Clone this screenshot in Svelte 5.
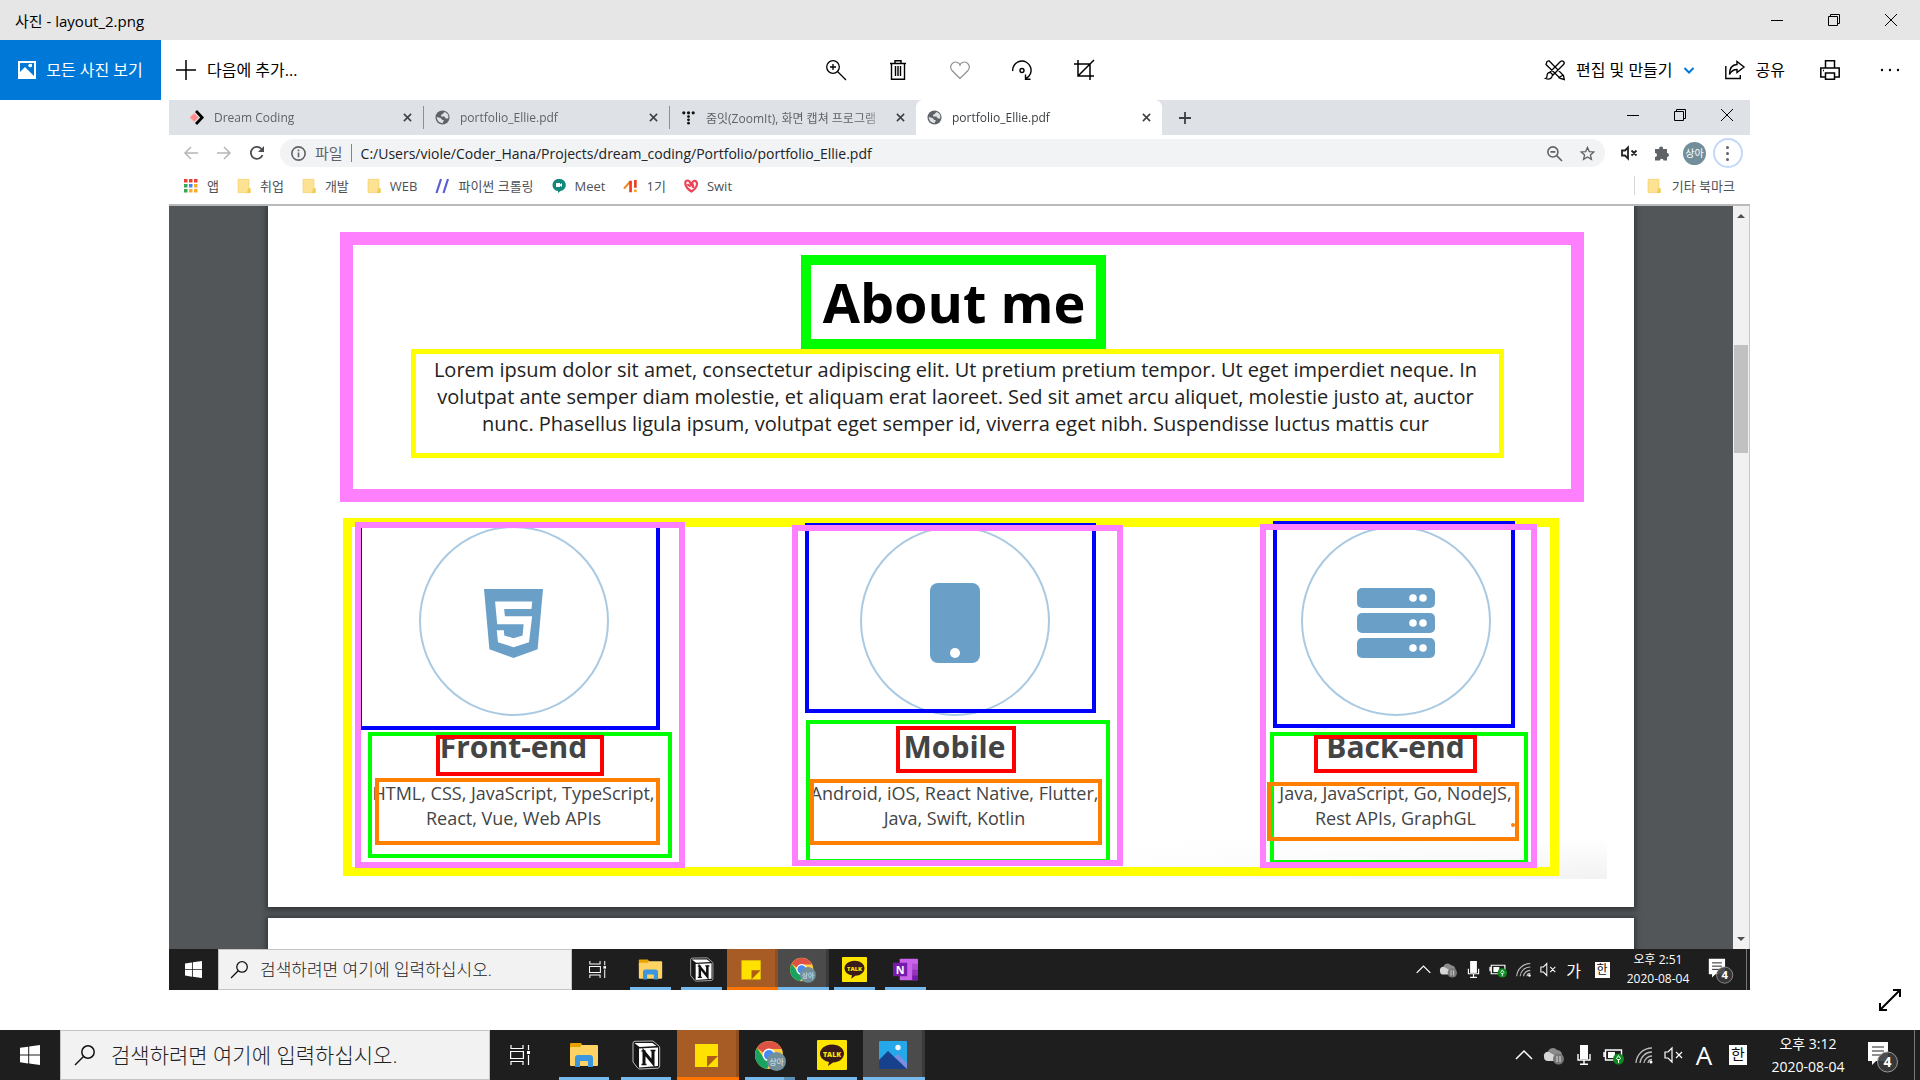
<script>
  const tabs = [
    { title: 'Dream Coding', icon: 'dream' },
    { title: 'portfolio_Ellie.pdf', icon: 'globe' },
    { title: '줌잇(ZoomIt), 화면 캡쳐 프로그램', icon: 'tistory' },
    { title: 'portfolio_Ellie.pdf', icon: 'globe', active: true }
  ];

  const bookmarks = [
    { label: '앱', icon: 'apps' },
    { label: '취업', icon: 'folder' },
    { label: '개발', icon: 'folder' },
    { label: 'WEB', icon: 'folder' },
    { label: '파이썬 크롤링', icon: 'slashes' },
    { label: 'Meet', icon: 'meet' },
    { label: '1기', icon: 'chart' },
    { label: 'Swit', icon: 'swit' }
  ];

  // Frame x is measured from the column centre, y from the column top.
  const skills = [
    {
      name: 'Front-end', icon: 'html5',
      lines: ['HTML, CSS, JavaScript, TypeScript,', 'React, Vue, Web APIs'],
      frames: [
        { color: 'blue', x: -156, y: -2, w: 302, h: 206 },
        { color: 'green', x: -146, y: 206, w: 304, h: 126 },
        { color: 'red', x: -78, y: 209, w: 168, h: 41 },
        { color: 'orange', x: -139, y: 252, w: 285, h: 67 },
        { color: 'pink', x: -159, y: -4, w: 330, h: 346 }
      ]
    },
    {
      name: 'Mobile', icon: 'phone',
      lines: ['Android, iOS, React Native, Flutter,', 'Java, Swift, Kotlin'],
      frames: [
        { color: 'blue', x: -150, y: -3, w: 291, h: 190 },
        { color: 'green', x: -149, y: 194, w: 304, h: 143 },
        { color: 'red', x: -59, y: 200, w: 120, h: 47 },
        { color: 'orange', x: -145, y: 253, w: 292, h: 66 },
        { color: 'pink', x: -163, y: -1, w: 331, h: 341 }
      ]
    },
    {
      name: 'Back-end', icon: 'server',
      lines: ['Java, JavaScript, Go, NodeJS,', 'Rest APIs, GraphGL'],
      frames: [
        { color: 'blue', x: -123, y: -5, w: 242, h: 207 },
        { color: 'green', x: -126, y: 206, w: 258, h: 132 },
        { color: 'red', x: -82, y: 209, w: 163, h: 38 },
        { color: 'orange', x: -129, y: 256, w: 252, h: 59 },
        { color: 'dot', x: 115, y: 297, w: 4, h: 4 },
        { color: 'pink', x: -136, y: -2, w: 277, h: 344 }
      ]
    }
  ];

  const innerApps = [
    { icon: 'explorer', label: '파일 탐색기' },
    { icon: 'notion', label: 'Notion' },
    { icon: 'sticky', label: '스티커 메모', state: 'alert' },
    { icon: 'chrome', label: 'Chrome', state: 'active' },
    { icon: 'talk', label: 'KakaoTalk' },
    { icon: 'onenote', label: 'OneNote' }
  ];
  const outerApps = [
    { icon: 'explorer', label: '파일 탐색기' },
    { icon: 'notion', label: 'Notion' },
    { icon: 'sticky', label: '스티커 메모', state: 'alert' },
    { icon: 'chrome', label: 'Chrome', state: 'grouped' },
    { icon: 'talk', label: 'KakaoTalk' },
    { icon: 'photos', label: '사진', state: 'active' }
  ];
  const tray = ['up', 'cloud', 'mic', 'battery', 'wifi', 'mute'];
</script>

{#snippet icon(name)}
  {#if name === 'min'}
    <svg class="ic" viewBox="0 0 12 12"><path d="M0 6.5h12" /></svg>
  {:else if name === 'restore'}
    <svg class="ic" viewBox="0 0 12 12"><path d="M.5 2.5h9v9h-9zM2.500 2.500v-2h9v9h-2" /></svg>
  {:else if name === 'close'}
    <svg class="ic" viewBox="0 0 12 12"><path d="M0 0l12 12M12 0L0 12" /></svg>
  {:else if name === 'picture'}
    <svg class="ic" viewBox="0 0 18 18"><path fill="#fff" stroke="none" fill-rule="evenodd" d="M0 0h18v18H0zM2 2v9l5-5 9 9V2zM10.500 4.500a1.800 1.800 0 1 0 3.600 0 1.800 1.800 0 1 0-3.600 0z" /><circle cx="12.300" cy="4.500" r="1.800" fill="#fff" stroke="none" /></svg>
  {:else if name === 'plus'}
    <svg class="ic" viewBox="0 0 20 20"><path stroke-width="1.500" d="M10 0v20M0 10h20" /></svg>
  {:else if name === 'zoomin'}
    <svg class="ic" viewBox="0 0 20 20"><g stroke-width="1.300"><circle cx="7" cy="7" r="6.300" /><path d="M11.500 11.500L20 20M7 4v6M4 7h6" /></g></svg>
  {:else if name === 'trash'}
    <svg class="ic" viewBox="0 0 20 20"><path stroke-width="1.400" d="M2 3.500h16M7 3V.7h6V3M3.500 3.500v15.800h13V3.500M7.500 6v10M10 6v10M12.500 6v10" /></svg>
  {:else if name === 'heart'}
    <svg class="ic" viewBox="0 0 20 20"><path stroke="#909090" stroke-width="1.200" d="M10 18.500L2 10.500C-1.500 6 3 .5 7.500 2.500Q9.500 3.500 10 5Q10.500 3.500 12.500 2.500C17 .5 21.500 6 18 10.500z" /></svg>
  {:else if name === 'rotate'}
    <svg class="ic" viewBox="0 0 20 20"><g stroke-width="1.400"><path d="M.7 11A9.200 9.200 0 1 1 14 18.500M13.500 14.500v4.800h5" /><circle cx="10" cy="10.500" r="2" /></g></svg>
  {:else if name === 'crop'}
    <svg class="ic" viewBox="0 0 20 20"><path stroke-width="1.500" d="M4 0v16h16M0 4h16v16M4 16L20 0" /></svg>
  {:else if name === 'edit'}
    <svg class="ic" viewBox="0 0 20 20"><g stroke-width="1.300"><path d="M2 1.500l2-.8 14.500 14.800.8 4-4-1L1 4.500zM13.500 18l4.500-3M18.500 1.500q1.500 1.500 0 3L8 15l-3-3L15.500 1.500q1.500-1.300 3 0zM5 12.500q-3 0-3 3.500 0 2-1.500 2.500 6 2 7-3.500" /></g></svg>
  {:else if name === 'chevron'}
    <svg class="ic" viewBox="0 0 10 10"><path stroke="#0078d7" stroke-width="2" d="M.5 3L5 7.500 9.500 3" /></svg>
  {:else if name === 'share'}
    <svg class="ic" viewBox="0 0 20 20"><path stroke-width="1.400" d="M.8 6v12.500h14.500V15M12 1.500L19 7l-7 5.500V9.500Q7 9.500 4.500 14.500 4.500 5 12 4.500z" /></svg>
  {:else if name === 'printer'}
    <svg class="ic" viewBox="0 0 20 20"><path stroke-width="1.500" d="M5.500 8V.8h9V8M5 17H.8V8h18.400v9H15M5.500 13h9v6.200h-9zM3 10.500h1" /></svg>
  {:else if name === 'dots'}
    <svg class="ic" viewBox="0 0 20 20"><g fill="#000" stroke="none"><circle cx="2" cy="10" r="1.200" /><circle cx="10" cy="10" r="1.200" /><circle cx="18" cy="10" r="1.200" /></g></svg>
  {:else if name === 'expand'}
    <svg class="ic" viewBox="0 0 22 22"><path stroke-width="2" d="M1 21L21 1M14 1h7v7M1 14v7h7" /></svg>
  {:else if name === 'dream'}
    <svg class="ic" viewBox="0 0 16 16"><path fill="#ff8a8a" stroke="#ffb3b3" d="M5.500 3.500L10 8l-4.500 4.500L1 8z" /><path stroke="#000" stroke-width="3" d="M7.500 1l6.500 7-6.500 7" /></svg>
  {:else if name === 'globe'}
    <svg class="ic" viewBox="0 0 16 16"><circle cx="8" cy="8" r="7.500" fill="#5f6368" stroke="none" /><path fill="#dee1e6" stroke="none" d="M10 2L8 4.500 6.500 5v2h3.500l1.500 2H14Q15.500 4 10 2zM1.800 7.500L6 8.500l1.500 2 2 .5-1.500 3Q2 13.500 1.800 7.500z" /></svg>
  {:else if name === 'tistory'}
    <svg class="ic" viewBox="0 0 16 16"><g fill="#111" stroke="none"><circle cx="3" cy="3" r="1.700" /><circle cx="8" cy="3" r="1.700" /><circle cx="13" cy="3" r="1.700" /><circle cx="8" cy="7" r="1.500" /><circle cx="8" cy="10.500" r="1.500" /><circle cx="8" cy="14" r="1.500" /></g></svg>
  {:else if name === 'x'}
    <svg class="ic" viewBox="0 0 10 10"><path stroke="#3c4043" stroke-width="1.700" d="M1 1l8 8M9 1L1 9" /></svg>
  {:else if name === 'newtab'}
    <svg class="ic" viewBox="0 0 12 12"><path stroke="#3c4043" stroke-width="1.800" d="M6 0v12M0 6h12" /></svg>
  {:else if name === 'back' || name === 'forward'}
    <svg class="ic" viewBox="0 0 14 14"><path stroke="#b4b6b9" stroke-width="1.500" d={name === 'back' ? 'M14 7H1M7 1L1 7l6 6' : 'M0 7h13M7 1l6 6-6 6'} /></svg>
  {:else if name === 'reload'}
    <svg class="ic" viewBox="0 0 14 14"><path stroke="#4a4d51" stroke-width="1.800" d="M12.500 9A6 6 0 1 1 11.500 3" /><path fill="#4a4d51" stroke="none" d="M14 0v6H8z" /></svg>
  {:else if name === 'info'}
    <svg class="ic" viewBox="0 0 14 14"><g stroke="#5f6368" stroke-width="1.500"><circle cx="7" cy="7" r="6.200" /><path d="M7 6v4.500M7 3.300v1.500" /></g></svg>
  {:else if name === 'zoomout'}
    <svg class="ic" viewBox="0 0 14 14"><g stroke="#5f6368" stroke-width="1.500"><circle cx="5.500" cy="5.500" r="4.700" /><path d="M9 9l5 5M3.200 5.500h4.600" /></g></svg>
  {:else if name === 'star'}
    <svg class="ic" viewBox="0 0 16 16"><path stroke="#5f6368" stroke-width="1.400" d="M8 1.500l1.900 4.400 4.800.4-3.600 3.200 1.100 4.700L8 11.700l-4.200 2.500 1.100-4.700L1.300 6.300l4.800-.4z" /></svg>
  {:else if name === 'tabmute'}
    <svg class="ic" viewBox="0 0 16 16"><path stroke="#222" stroke-width="1.800" d="M1 5.500h3l3-3v11l-3-3H1zM10.500 5.500l5 5M15.500 5.500l-5 5" /></svg>
  {:else if name === 'puzzle'}
    <svg class="ic" viewBox="0 0 16 16"><path fill="#5f6368" stroke="none" d="M1 4h4.200a2 2 0 1 1 3.800 0h4v4a2 2 0 1 1 0 4v3.500H9.500a1.800 1.800 0 1 0-3.600 0H1V12a2 2 0 1 0 0-4z" /></svg>
  {:else if name === 'apps'}
    <svg class="ic" viewBox="0 0 14 14"><g stroke="none"><path fill="#e94335" d="M0 0h3.500v3.500H0zM5 0h3.500v3.500H5zM10 0h3.500v3.500H10z" /><path fill="#34a853" d="M0 5h3.500v3.500H0zM0 10h3.500v3.500H0z" /><path fill="#4285f4" d="M5 5h3.500v3.500H5z" /><path fill="#f9ab2e" d="M10 5h3.500v3.500H10zM5 10h3.500v3.500H5zM10 10h3.500v3.500H10z" /></g></svg>
  {:else if name === 'folder'}
    <svg class="ic" viewBox="0 0 14 14"><path fill="#fde293" stroke="#f3cf62" stroke-width=".6" d="M1 .3h11v9.200h1.200v4.200H1z" /><path fill="#f2cb55" stroke="none" d="M11 9.500h2.500V14H10z" /></svg>
  {:else if name === 'slashes'}
    <svg class="ic" viewBox="0 0 14 14"><path stroke="#5b5fd6" stroke-width="2.200" d="M1.500 14L6 0M8.500 14L13 0" /></svg>
  {:else if name === 'meet'}
    <svg class="ic" viewBox="0 0 14 14"><path fill="#11887a" stroke="none" d="M7 0a6 6 0 0 1 1.500 12L6 14v-2A6 6 0 0 1 7 0z" /><path fill="#fff" stroke="none" d="M4 4h4v1.500L10 4v4L8 6.700V8H4z" /></svg>
  {:else if name === 'chart'}
    <svg class="ic" viewBox="0 0 16 14"><path stroke="#f58220" stroke-width="2.400" d="M0 10L7 2" /><path stroke="#ee3a1f" stroke-width="3" d="M7.500 1v13M13 0v9" /><path stroke="#f9a01b" stroke-width="3" d="M13 11v3" /></svg>
  {:else if name === 'swit'}
    <svg class="ic" viewBox="0 0 14 14"><path stroke="#ee4257" stroke-width="2.200" d="M7 6Q6 1.500 3.500 1.500T1.300 5Q2 9 7.500 12.500 13 9 13 4.500 12.500 1.500 10 2 7 3 9 6M3.500 5q2 3 4 1T9 9" /></svg>
  {:else if name === 'html5'}
    <svg class="skill-icon html" viewBox="0 0 384 448"><path fill="#6aa0c8" fill-rule="evenodd" d="M0 0h384l-35 392-157 56L35 392zM72 80l14 149h172l-7 73-59 18-60-18-3-34H83l8 78 101 32 101-32 20-169H136l-5-48h178l5-49z" /></svg>
  {:else if name === 'phone'}
    <svg class="skill-icon tall" viewBox="0 0 50 80"><rect width="50" height="80" rx="8" fill="#6aa0c8" /><circle cx="25" cy="70" r="5" fill="#fff" /></svg>
  {:else if name === 'server'}
    <svg class="skill-icon wide" viewBox="0 0 78 70">
      {#each [0, 25, 50] as y}
        <rect {y} width="78" height="20" rx="5" fill="#6aa0c8" /><circle cx="56" cy={y + 10} r="3.800" fill="#fff" /><circle cx="66" cy={y + 10} r="3.800" fill="#fff" />
      {/each}
    </svg>
  {:else if name === 'windows'}
    <svg class="ic" viewBox="0 0 20 20"><path fill="#fff" stroke="none" d="M0 2.800L8.200 1.700V9.600H0zM9.200 1.500L20 0v9.600H9.200zM0 10.500h8.200v7.900L0 17.200zM9.200 10.500H20V20L9.200 18.500z" /></svg>
  {:else if name === 'search'}
    <svg class="ic" viewBox="0 0 20 20"><g stroke="#111" stroke-width="1.500"><circle cx="13" cy="7" r="6.200" /><path d="M8.500 11.500L0 20" /></g></svg>
  {:else if name === 'taskview'}
    <svg class="ic" viewBox="0 0 20 20"><path stroke="#fff" stroke-width="1.200" d="M1 0v3.500h12V0M1 20v-3.500h12V20M.6 6.500h12.800v7H.6zM18.500 0v5M18.500 10v10" /><path fill="#fff" stroke="none" d="M17 6h3v3h-3z" /></svg>
  {:else if name === 'explorer'}
    <svg class="ic" viewBox="0 0 30 30"><g stroke="none"><path fill="#e8a200" d="M1 4q0-1 1-1h10l2 3v4H1z" /><path fill="#ffd264" d="M1 8q0-1 1-1h9l2-2h15q1 0 1 1v19q0 1-1 1H2q-1 0-1-1z" /><path fill="#3b97dd" d="M6 27V18q0-3 3-3h12q3 0 3 3v9h-5v-6h-8v6z" /></g></svg>
  {:else if name === 'notion'}
    <svg class="ic" viewBox="0 0 30 30"><path fill="#161616" stroke="#bbb" stroke-width="1" d="M2 3q0-1.500 2-1.700L22 1l6 5q.7.600.7 2v18q0 2-2 2.200L9 29q-1.500 0-2.300-1L2 22z" /><path fill="#fff" stroke="none" d="M8 8.500L27 7.500V26L8 27.500zM3.500 3l5 4 17-1-4-3z" /><path stroke="#111" stroke-width="3" d="M13 24V12l9 11V10.500" /><path stroke="#111" stroke-width="1.500" d="M10.500 11h4M10.500 24.500h5M19.500 10.500h5" /></svg>
  {:else if name === 'sticky'}
    <svg class="ic" viewBox="0 0 30 30"><g stroke="none"><path fill="#ffe100" d="M3 4h23v23H3z" /><path fill="#b05c16" d="M15 16h11L15 27z" /></g></svg>
  {:else if name === 'chrome'}
    <svg class="ic" viewBox="0 0 30 30"><g stroke="none"><circle cx="14" cy="15" r="14" fill="#ffcd40" /><path fill="#de5246" d="M2 8A14 14 0 0 1 26.500 9H14a6 6 0 0 0-5.500 4z" /><path fill="#1aa260" d="M2 8L9 18a6 6 0 0 0 7 3l-4 8A14 14 0 0 1 2 8z" /><circle cx="14" cy="15" r="6.500" fill="#fff" /><circle cx="14" cy="15" r="5" fill="#4688f4" /><circle cx="21.500" cy="21.500" r="9.500" fill="#728e9b" /></g><text class="badge-text" x="21.500" y="25" text-anchor="middle">상아</text></svg>
  {:else if name === 'talk'}
    <svg class="ic" viewBox="0 0 30 30"><rect width="30" height="30" rx="1" fill="#fee500" stroke="none" /><path fill="#391b1b" stroke="none" d="M15 4.500c7 0 12 4 12 9s-5 9-11 9l-5 3.500 1-4C7 21 3 18 3 13.500s5-9 12-9z" /><text class="talk-text" x="15" y="16.500" text-anchor="middle">TALK</text></svg>
  {:else if name === 'onenote'}
    <svg class="ic" viewBox="0 0 30 30"><g stroke="none"><rect x="8" y="2" width="22" height="26" rx="1" fill="#ca64ea" /><path fill="#ae4bd5" d="M23 8h7v7h-7z" /><path fill="#9332bf" d="M23 15h7v7h-7z" /><path fill="#7719aa" d="M23 22h7v6h-7zM0 7h17v16H0z" /></g><text class="n-text" x="8.500" y="20" text-anchor="middle">N</text></svg>
  {:else if name === 'photos'}
    <svg class="ic" viewBox="0 0 30 30"><g stroke="none"><rect x="1" y="1" width="28" height="28" rx="1" fill="#25a8ea" /><path fill="#7b8ee0" d="M11 22l9-8 9 9v6H11z" /><path fill="#17418c" d="M1 20l9-9 19 18H1z" /><circle cx="20" cy="7.500" r="2.700" fill="#f4f6fa" /></g></svg>
  {:else if name === 'up'}
    <svg class="ic" viewBox="0 0 20 20"><path stroke="#fff" stroke-width="1.500" d="M2 14l8-8 8 8" /></svg>
  {:else if name === 'cloud'}
    <svg class="ic" viewBox="0 0 20 20"><g stroke="none"><path fill="#8b8b8b" d="M4 8a5 5 0 0 1 9-3 5 5 0 0 1 5 6H4z" /><path fill="#d6d6d6" d="M0 12a4 4 0 0 1 5-5l10 6-3 3H4a4 4 0 0 1-4-4z" /><circle cx="14.500" cy="14" r="5.500" fill="#777" /></g><path stroke="#ddd" d="M13 11v6M16 11v6" /></svg>
  {:else if name === 'mic'}
    <svg class="ic" viewBox="0 0 20 20"><rect x="6" y="0" width="8" height="14" fill="#fff" stroke="none" /><path stroke="#fff" stroke-width="1.400" d="M4 9v6h12V9M10 15v4.300M6 19.300h8" /></svg>
  {:else if name === 'battery'}
    <svg class="ic" viewBox="0 0 20 20"><path stroke="#fff" stroke-width="1.400" d="M1.500 5h16v10h-16zM0 7v5" /><path fill="#fff" stroke="none" d="M4 7h7v6H4z" /><circle cx="14.500" cy="14" r="5.500" fill="#0f8a1e" stroke="none" /><path stroke="#fff" d="M14.500 10.500l-2 3 2 2 2-2zM14.500 14v4" /></svg>
  {:else if name === 'wifi'}
    <svg class="ic" viewBox="0 0 20 20"><g stroke="#bbb" stroke-width="1.300"><path d="M2 18A16 16 0 0 1 18 3M6 18A12 12 0 0 1 18 7M10 18a8 8 0 0 1 8-7M14 18a4 4 0 0 1 4-3.500" /></g><circle cx="17" cy="17" r="1.500" fill="#fff" stroke="none" /></svg>
  {:else if name === 'mute'}
    <svg class="ic" viewBox="0 0 20 20"><path stroke="#fff" stroke-width="1.200" d="M1 7h3l4-4v14l-4-4H1zM12 7l6 6M18 7l-6 6" /></svg>
  {:else if name === 'notify'}
    <svg class="ic" viewBox="0 0 32 32"><path fill="#fff" stroke="none" d="M1 1h20v19H9l-4 4v-4H1z" /><path stroke="#222" stroke-width="1.200" d="M5 6h12M5 10h12M5 14h9" /><circle cx="20.500" cy="21" r="10" fill="#3a3a3a" fill-opacity=".9" stroke="#999" /><text class="count-text" x="20.500" y="26" text-anchor="middle">4</text></svg>
  {/if}
{/snippet}

{#snippet taskbar(apps, ime, time, kind)}
  <div class="taskbar {kind}">
    <button class="start" aria-label="시작">{@render icon('windows')}</button>
    <label class="search">
      {@render icon('search')}
      <input type="text" placeholder="검색하려면 여기에 입력하십시오." aria-label="검색" />
    </label>
    <button class="taskview" aria-label="작업 보기">{@render icon('taskview')}</button>
    {#each apps as app}
      <button class="app {app.state ?? ''}" aria-label={app.label}>{@render icon(app.icon)}</button>
    {/each}
    <div class="tray">
      {#each tray as name}
        <button class="tray-item" aria-label={name}>{@render icon(name)}</button>
      {/each}
      <button class="tray-item ime">{ime}</button>
      <button class="lang"><span>한</span></button>
      <div class="clock"><span>오후 {time}</span><span>2020-08-04</span></div>
      <button class="notify" aria-label="알림 4">{@render icon('notify')}</button>
      <span class="desktop-edge"></span>
    </div>
  </div>
{/snippet}

<div class="app-window">
  <header class="titlebar">
    <span class="title">사진 - layout_2.png</span>
    <button class="win" aria-label="최소화">{@render icon('min')}</button>
    <button class="win" aria-label="이전 크기로">{@render icon('restore')}</button>
    <button class="win" aria-label="닫기">{@render icon('close')}</button>
  </header>

  <nav class="toolbar">
    <div class="side">
      <button class="all-photos">{@render icon('picture')}<span>모든 사진 보기</span></button>
      <button class="add-to">{@render icon('plus')}<span>다음에 추가...</span></button>
    </div>
    <div class="tools">
      <button aria-label="확대">{@render icon('zoomin')}</button>
      <button aria-label="삭제">{@render icon('trash')}</button>
      <button aria-label="즐겨찾기">{@render icon('heart')}</button>
      <button aria-label="회전">{@render icon('rotate')}</button>
      <button aria-label="자르기">{@render icon('crop')}</button>
    </div>
    <div class="side end">
      <button class="edit">{@render icon('edit')}<span>편집 및 만들기</span>{@render icon('chevron')}</button>
      <button class="share">{@render icon('share')}<span>공유</span></button>
      <button class="print" aria-label="인쇄">{@render icon('printer')}</button>
      <button class="more" aria-label="더 보기">{@render icon('dots')}</button>
    </div>
  </nav>

  <main class="viewer">
    <div class="photo">
      <div class="tabstrip">
        {#each tabs as tab, i}
          <div class="tab" class:active={tab.active} class:divided={i < 2}>
            {@render icon(tab.icon)}
            <span class="tab-title">{tab.title}</span>
            <button class="tab-close" aria-label="탭 닫기">{@render icon('x')}</button>
          </div>
        {/each}
        <button class="new-tab" aria-label="새 탭">{@render icon('newtab')}</button>
        <div class="chrome-win">
          <button aria-label="최소화">{@render icon('min')}</button>
          <button aria-label="이전 크기로">{@render icon('restore')}</button>
          <button aria-label="닫기">{@render icon('close')}</button>
        </div>
      </div>

      <div class="address-row">
        <button class="nav" aria-label="뒤로">{@render icon('back')}</button>
        <button class="nav" aria-label="앞으로">{@render icon('forward')}</button>
        <button class="nav" aria-label="새로고침">{@render icon('reload')}</button>
        <div class="omnibox">
          {@render icon('info')}
          <span class="scheme">파일</span>
          <input type="text" aria-label="주소" value="C:/Users/viole/Coder_Hana/Projects/dream_coding/Portfolio/portfolio_Ellie.pdf" />
          <button aria-label="축소">{@render icon('zoomout')}</button>
          <button aria-label="북마크">{@render icon('star')}</button>
        </div>
        <button class="ext" aria-label="음소거">{@render icon('tabmute')}</button>
        <button class="ext" aria-label="확장 프로그램">{@render icon('puzzle')}</button>
        <button class="ext"><span class="avatar">상아</span></button>
        <button class="ext" aria-label="메뉴"><span class="menu"><i></i><i></i><i></i></span></button>
      </div>

      <div class="bookmarks">
        {#each bookmarks as mark}
          <a href="#{mark.label}">{@render icon(mark.icon)}{mark.label}</a>
        {/each}
        <a class="other" href="#other">{@render icon('folder')}기타 북마크</a>
      </div>

      <div class="pdf">
        <div class="pages">
          <article class="page">
            <section class="about">
              <h1>About me</h1>
              <p>
                Lorem ipsum dolor sit amet, consectetur adipiscing elit. Ut pretium pretium tempor. Ut eget imperdiet neque. In<br />
                volutpat ante semper diam molestie, et aliquam erat laoreet. Sed sit amet arcu aliquet, molestie justo at, auctor<br />
                nunc. Phasellus ligula ipsum, volutpat eget semper id, viverra eget nibh. Suspendisse luctus mattis cur
              </p>
            </section>
            <section class="skills">
              <div class="columns">
                {#each skills as skill}
                  <div class="skill">
                    <div class="circle">{@render icon(skill.icon)}</div>
                    <h2>{skill.name}</h2>
                    <p>{skill.lines[0]}<br />{skill.lines[1]}</p>
                    {#each skill.frames as f}
                      <span class="frame {f.color}" style="left: calc(50% + {f.x}px); top: {f.y}px; width: {f.w}px; height: {f.h}px"></span>
                    {/each}
                  </div>
                {/each}
              </div>
            </section>
          </article>
          <article class="page next"></article>
        </div>
        <div class="scrollbar"><span class="arrow up"></span><span class="thumb"></span><span class="arrow down"></span></div>
      </div>

      {@render taskbar(innerApps, '가', '2:51', 'inner')}
    </div>
    <button class="fullscreen" aria-label="전체 화면">{@render icon('expand')}</button>
  </main>

  {@render taskbar(outerApps, 'A', '3:12', 'outer')}
</div>

<style>
  :global(body) { margin: 0; }
  * { box-sizing: border-box; }
  button { border: 0; padding: 0; background: none; font: inherit; color: inherit; display: flex; align-items: center; justify-content: center; flex: none; }
  input { border: 0; padding: 0; background: none; font: inherit; color: inherit; min-width: 0; outline: 0; }
  a { color: inherit; text-decoration: none; }
  .ic { display: block; flex: none; width: 20px; height: 20px; fill: none; stroke: #000; stroke-width: 1; overflow: visible; }

  .app-window { min-height: 100vh; display: flex; flex-direction: column; background: #fff; color: #000; font-family: "Open Sans", "Noto Sans CJK KR", sans-serif; overflow: hidden; }

  .titlebar { display: flex; height: 40px; align-items: center; background: #e6e6e6; padding: 0 1px 0 15px; font-size: 15px; }
  .title { flex: 1; }
  .win { width: 57px; height: 40px; }
  .win .ic, .chrome-win .ic { width: 12px; height: 12px; }

  .toolbar { display: flex; height: 60px; font-size: 16px; }
  .toolbar span { padding-bottom: 2px; }
  .side { flex: 1; display: flex; align-items: stretch; }
  .end { justify-content: flex-end; padding-right: 20px; }
  .all-photos { width: 161px; gap: 10px; background: #0078d7; color: #fff; }
  .all-photos .ic { width: 18px; height: 18px; }
  .add-to { padding-left: 15px; gap: 11px; }
  .tools { display: flex; align-items: center; padding-left: 20px; }
  .tools button { width: 62px; height: 60px; }
  .edit, .share { gap: 11px; }
  .edit { margin-right: 31px; }
  .edit .ic:last-child { width: 10px; height: 10px; }
  .print { margin: 0 40px 0 35px; }

  .viewer { flex: 1; position: relative; padding: 0 170px 0 169px; }
  .fullscreen { position: absolute; right: 19px; bottom: 19px; }
  .fullscreen .ic { width: 22px; height: 22px; }
  .photo { display: flex; flex-direction: column; }

  .tabstrip { display: flex; height: 35px; background: #dee1e6; padding-left: 9px; font-size: 12px; color: #5f6368; }
  .tab { position: relative; display: flex; align-items: center; width: 246px; padding: 0 11px 0 11px; gap: 10px; }
  .tab .ic { width: 15px; height: 15px; }
  .tab-close .ic { width: 9px; height: 9px; }
  .tab-title { flex: 1; min-width: 0; overflow: hidden; white-space: nowrap; mask-image: linear-gradient(90deg, #000 88%, transparent); }
  .tab.divided { border-right: 1px solid #8c8f94; border-image: linear-gradient(transparent 20%, #8c8f94 20%, #8c8f94 80%, transparent 80%) 1; }
  .tab.active { background: #fff; border-radius: 7px 7px 0 0; color: #3c4043; }
  .new-tab { width: 46px; }
  .new-tab .ic { width: 12px; height: 12px; }
  .chrome-win { display: flex; margin-left: auto; height: 30px; }
  .chrome-win button { width: 47px; }

  .address-row { display: flex; align-items: center; height: 36px; padding: 0 6px 0 5px; }
  .nav { width: 33px; }
  .nav .ic { width: 14px; height: 14px; }
  .omnibox { flex: 1; display: flex; align-items: center; height: 28px; margin: 0 7px; padding: 0 8px 0 11px; border-radius: 14px; background: #f1f3f4; font-size: 14px; color: #202124; }
  .omnibox .ic { width: 15px; height: 15px; }
  .omnibox input { flex: 1; margin-left: 9px; }
  .omnibox button { width: 20px; margin-left: 13px; }
  .scheme { margin-left: 9px; padding-right: 8px; line-height: 18px; border-right: 1px solid #80868b; color: #5f6368; font-size: 15px; }
  .ext { width: 33px; }
  .ext .ic { width: 16px; height: 16px; }
  .avatar { width: 23px; height: 23px; border-radius: 50%; background: #728e9b; color: #fff; font-size: 10px; line-height: 23px; }
  .menu { display: flex; flex-direction: column; align-items: center; justify-content: center; gap: 3px; width: 30px; height: 30px; border: 2px solid #c3d8f8; border-radius: 50%; }
  .menu i { width: 3px; height: 3px; border-radius: 50%; background: #5f6368; }

  .bookmarks { display: flex; align-items: center; height: 35px; gap: 18px; padding: 0 15px 4px; border-bottom: 2px solid #b9babb; font-size: 13px; color: #4d5156; }
  .bookmarks a { display: flex; align-items: center; gap: 9px; white-space: nowrap; }
  .bookmarks .ic { width: 14px; height: 14px; }
  .bookmarks .other { margin-left: auto; padding-left: 12px; gap: 11px; border-left: 1px solid #d5d7da; }

  .pdf { display: flex; height: 743px; background: #525659; overflow: hidden; }
  .pages { flex: 1; padding: 0 99px; }
  .page {
    height: 701px;
    padding: 26px 0 0;
    box-shadow: 0 1px 5px 2px #34373a;
    background:
      linear-gradient(90deg, #fff, transparent) no-repeat right 27px top 632px / 560px 41px,
      linear-gradient(#fff, #f2f2f2) no-repeat right 27px top 632px / 560px 41px,
      #fff;
  }
  .next { height: 60px; margin-top: 11px; background: #fff; }
  .about { display: flex; flex-direction: column; align-items: center; height: 270px; margin: 0 50px 0 72px; padding: 10px 76px 0 58px; border: 13px solid #ff80ff; font-family: "Open Sans", sans-serif; }
  h1 { width: 305px; height: 94px; margin: 0; padding-left: 2px; border: 10px solid #0f0; font-size: 54px; line-height: 74px; text-align: center; white-space: nowrap; }
  .about p { align-self: stretch; height: 109px; margin: 0 -9px 0 0; padding: 2px 4px 0 0; border: 5px solid #ff0; font-size: 20px; line-height: 27px; text-align: center; white-space: nowrap; color: #222; }
  .skills { height: 358px; margin: 16px 75px 0; border: 9px solid #ff0; font-family: "Open Sans", sans-serif; }
  .columns { display: grid; grid-template-columns: repeat(3, 1fr); margin: -1px -66px 0 -59px; }
  .skill { position: relative; text-align: center; color: #444; }
  .circle { display: flex; align-items: center; justify-content: center; width: 190px; height: 190px; margin: 0 auto; padding-top: 4px; border: 2px solid #a9cae2; border-radius: 50%; }
  .skill-icon { display: block; }
  .html { width: 59px; height: 69px; }
  .tall { width: 50px; height: 80px; }
  .wide { width: 78px; height: 70px; }
  h2 { margin: 9px 0 0; font-size: 30px; line-height: 44px; }
  .skill p { margin: 12px 0 0; font-size: 18px; line-height: 25px; white-space: nowrap; }
  .frame { position: absolute; border: 4px solid; }
  .blue { border-color: #00f; }
  .green { border-color: #0f0; }
  .red { border-color: #f00; }
  .orange, .dot { border-color: #ff8000; }
  .dot { border-width: 2px; border-radius: 50%; }
  .pink { border: 6px solid #ff80ff; }

  .scrollbar { display: flex; flex-direction: column; align-items: center; width: 17px; padding: 8px 0; background: #f1f1f1; border-right: 1px solid #c8c8c8; }
  .arrow { border: 4px solid transparent; }
  .arrow.up { border-top: 0; border-bottom-color: #505050; }
  .arrow.down { border-bottom: 0; border-top-color: #505050; margin-top: auto; }
  .thumb { width: 14px; height: 108px; margin-top: 127px; background: #c1c1c1; }

  .taskbar { display: flex; background: #1e1e1e; color: #fff; }
  .search { display: flex; align-items: center; background: #f2f2f2; border: 1px solid #c4c4c4; color: #222; font-weight: 300; }
  .search input { flex: 1; }
  .search input::placeholder { color: #222; opacity: 1; }
  .app { position: relative; }
  .app::after { content: ""; position: absolute; bottom: 0; left: 10%; right: 10%; height: 3px; background: #76b9ed; }
  .app.alert { background: #a65c24; border-right: 3px solid #8f4f1f; }
  .app.alert::after { left: 0; right: -3px; background: #ff7300; }
  .app.active { background: #4b4b4b; border-right: 3px solid #3a3a3a; }
  .app.active::after { left: 0; right: -3px; }
  .app.grouped::after { background: linear-gradient(90deg, #76b9ed 79%, #5a8fb8 79%); }
  .badge-text { font-size: 8px; fill: #dfe8ec; stroke: none; }
  .talk-text { font-size: 7px; font-weight: 800; fill: #fee500; stroke: none; }
  .n-text { font-size: 13px; font-weight: 700; fill: #fff; stroke: none; }
  .count-text { font-size: 14px; font-weight: 700; fill: #fff; stroke: none; }
  .tray { display: flex; align-items: stretch; margin-left: auto; }
  .lang span { background: #fff; color: #111; text-align: center; }
  .clock { display: flex; flex-direction: column; align-items: center; justify-content: center; white-space: nowrap; padding-bottom: 1px; }
  .desktop-edge { border-left: 1px solid #777; }
  .notify { padding-top: 3px; }

  .outer { height: 50px; }
  .outer .start { width: 60px; }
  .outer .search { width: 430px; padding-left: 14px; gap: 16px; font-size: 21px; }
  .outer .taskview { width: 60px; }
  .outer .taskview + .app { margin-left: 3px; }
  .outer .app { width: 62px; }
  .outer .app .ic { width: 30px; height: 30px; }
  .outer .tray-item { width: 30px; }
  .outer .ime { font-size: 26px; }
  .outer .lang { width: 38px; }
  .outer .lang span { width: 18px; height: 20px; font-size: 15px; line-height: 19px; }
  .outer .clock { width: 102px; font-size: 14px; line-height: 23px; }
  .outer .notify { width: 42px; padding-left: 5px; }
  .outer .notify .ic { width: 32px; height: 32px; }
  .outer .desktop-edge { width: 6px; margin-left: 13px; }

  .inner { height: 41px; }
  .inner .start { width: 49px; }
  .inner .start .ic, .inner .tray-item .ic, .inner .taskview .ic, .inner .search .ic { width: 17px; height: 17px; }
  .inner .search { width: 354px; padding-left: 12px; gap: 12px; font-size: 17px; }
  .inner .taskview { width: 51px; }
  .inner .taskview + .app { margin-left: 2px; }
  .inner .app { width: 51px; }
  .inner .app .ic { width: 25px; height: 25px; }
  .inner .tray-item { width: 25px; }
  .inner .ime { font-size: 16px; }
  .inner .lang { width: 32px; }
  .inner .lang span { width: 15px; height: 16px; font-size: 12px; line-height: 15px; }
  .inner .clock { width: 80px; font-size: 12px; line-height: 19px; }
  .inner .notify { width: 46px; }
  .inner .notify .ic { width: 26px; height: 26px; }
  .inner .desktop-edge { width: 4px; margin-left: 2px; }
</style>
